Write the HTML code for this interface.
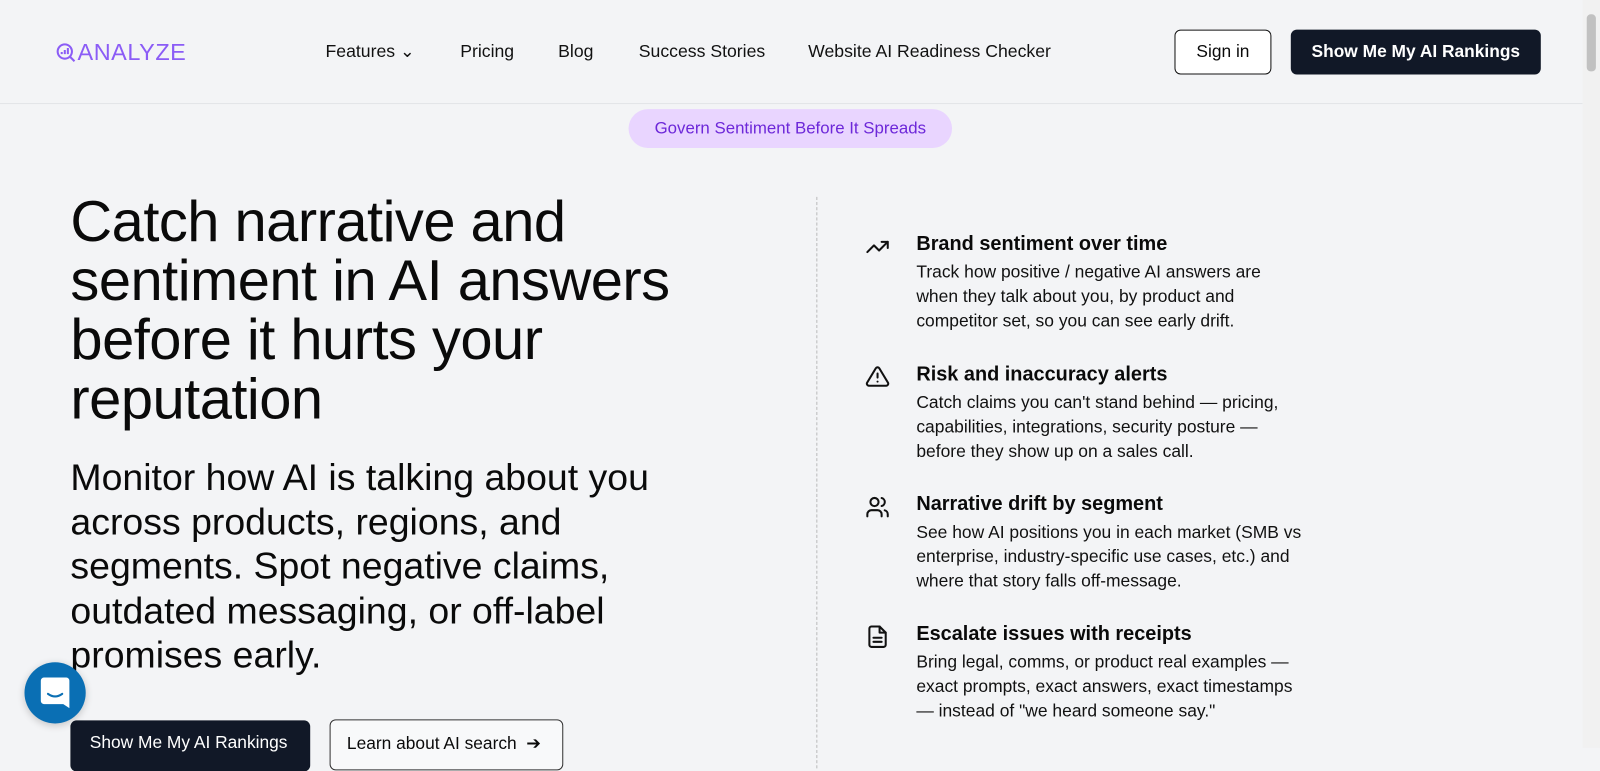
<!DOCTYPE html>
<html><head><meta charset="utf-8"><style>
*{box-sizing:border-box;margin:0;padding:0}
body{width:1600px;height:748px;overflow:hidden;background:#f3f4f6;font-family:"Liberation Sans",Arial,sans-serif;color:#0a0a0a;position:relative}
#w{position:absolute;left:0;top:0;width:1568px;height:733px;transform:scale(1.0204);transform-origin:0 0}
.hdr{position:absolute;left:0;top:0;width:1551px;height:102px;border-bottom:1px solid #e2e4e8;background:#f3f4f6}
.logo{position:absolute;left:55px;top:38px;color:#8b5cf6;font-size:23px;letter-spacing:0.5px;display:flex;align-items:center;gap:1px}
.nav a{position:absolute;top:40px;font-size:17.3px;color:#111;text-decoration:none}
.btn1{position:absolute;left:1151px;top:29px;width:95px;height:44px;border:1px solid #111;border-radius:6px;font-size:17px;display:flex;align-items:center;justify-content:center;background:#fff}
.btn2{position:absolute;left:1265px;top:29px;width:245px;height:44px;background:#111827;color:#fff;border-radius:6px;font-size:17px;font-weight:bold;display:flex;align-items:center;justify-content:center}
.pill{position:absolute;left:616px;top:107px;width:317px;height:38px;border-radius:19px;background:#e9d5ff;color:#6d28d9;font-size:16.5px;display:flex;align-items:center;justify-content:center}
h1{position:absolute;left:69px;top:189px;font-size:56.7px;line-height:58px;font-weight:normal;width:700px;letter-spacing:-0.5px}
.sub{position:absolute;left:69px;top:446px;font-size:36.7px;line-height:43.5px;width:620px}
.b1{position:absolute;left:69px;top:706px;width:235px;height:50px;background:#111827;color:#fff;border-radius:6px;font-size:17px;padding:12px 0 0 19px}
.b2{position:absolute;left:323px;top:705px;width:229px;height:50px;border:1px solid #333;border-radius:6px;font-size:17px;padding:13px 0 0 16px;background:#f8f9fa}
.dash{position:absolute;left:800px;top:193px;height:560px;border-left:1px dashed #bbb}
.item{position:absolute;left:898px;width:380px}
.item h3{font-size:19.5px;line-height:24px;font-weight:bold;margin-bottom:4px}
.item p{font-size:17.1px;line-height:24px;color:#111}
.ic{position:absolute;left:848px}
.chat{position:absolute;left:24px;top:649px;width:60px;height:60px;border-radius:50%;background:#0a6fb4;box-shadow:0 2px 8px rgba(0,0,0,.2)}
.sb{position:absolute;left:1551px;top:0;width:17px;height:733px;background:#f1f1f1}
.sb div{position:absolute;left:4px;top:14px;width:9px;height:56px;background:#c1c1c1;border-radius:4px}
</style></head><body><div id="w">
<div class="hdr">
<div class="logo"><svg width="20" height="20" viewBox="0 0 20 20" fill="none" stroke="#8b5cf6" stroke-width="2"><circle cx="8.5" cy="8.5" r="7"/><line x1="13.5" y1="13.5" x2="18" y2="18"/><line x1="5.5" y1="11" x2="5.5" y2="9"/><line x1="8.5" y1="11" x2="8.5" y2="7"/><line x1="11.5" y1="11" x2="11.5" y2="5"/></svg><span>ANALYZE</span></div>
<div class="nav"><a style="left:319px">Features ⌄</a><a style="left:451px">Pricing</a><a style="left:547px">Blog</a><a style="left:626px">Success Stories</a><a style="left:792px">Website AI Readiness Checker</a></div>
<div class="btn1">Sign in</div><div class="btn2">Show Me My AI Rankings</div>
</div>
<div class="pill">Govern Sentiment Before It Spreads</div>
<h1>Catch narrative and sentiment in AI answers before it hurts your reputation</h1>
<div class="sub">Monitor how AI is talking about you across products, regions, and segments. Spot negative claims, outdated messaging, or off-label promises early.</div>
<div class="b1">Show Me My AI Rankings</div>
<div class="b2">Learn about AI search &nbsp;➔</div>
<div class="dash"></div>
<svg class="ic" style="top:230px" width="24" height="24" viewBox="0 0 24 24" fill="none" stroke="#111" stroke-width="2" stroke-linecap="round" stroke-linejoin="round"><polyline points="2 17 8.5 10.5 13.5 15.5 22 7"/><polyline points="16 7 22 7 22 13"/></svg>
<div class="item" style="top:227px"><h3>Brand sentiment over time</h3><p>Track how positive / negative AI answers are when they talk about you, by product and competitor set, so you can see early drift.</p></div>
<svg class="ic" style="top:357px" width="24" height="24" viewBox="0 0 24 24" fill="none" stroke="#111" stroke-width="2" stroke-linecap="round" stroke-linejoin="round"><path d="M10.3 3.9 1.8 18a2 2 0 0 0 1.7 3h17a2 2 0 0 0 1.7-3L13.7 3.9a2 2 0 0 0-3.4 0z"/><line x1="12" y1="9" x2="12" y2="13"/><line x1="12" y1="17" x2="12" y2="17"/></svg>
<div class="item" style="top:355px"><h3>Risk and inaccuracy alerts</h3><p>Catch claims you can't stand behind — pricing, capabilities, integrations, security posture — before they show up on a sales call.</p></div>
<svg class="ic" style="top:485px" width="24" height="24" viewBox="0 0 24 24" fill="none" stroke="#111" stroke-width="2" stroke-linecap="round" stroke-linejoin="round"><path d="M16 21v-2a4 4 0 0 0-4-4H6a4 4 0 0 0-4 4v2"/><circle cx="9" cy="7" r="4"/><path d="M22 21v-2a4 4 0 0 0-3-3.9"/><path d="M16 3.1a4 4 0 0 1 0 7.8"/></svg>
<div class="item" style="top:482px"><h3>Narrative drift by segment</h3><p>See how AI positions you in each market (SMB vs enterprise, industry-specific use cases, etc.) and where that story falls off-message.</p></div>
<svg class="ic" style="top:612px" width="24" height="24" viewBox="0 0 24 24" fill="none" stroke="#111" stroke-width="2" stroke-linecap="round" stroke-linejoin="round"><path d="M14 2H6a2 2 0 0 0-2 2v16a2 2 0 0 0 2 2h12a2 2 0 0 0 2-2V8z"/><polyline points="14 2 14 8 20 8"/><line x1="16" y1="13" x2="8" y2="13"/><line x1="16" y1="17" x2="8" y2="17"/></svg>
<div class="item" style="top:609px"><h3>Escalate issues with receipts</h3><p>Bring legal, comms, or product real examples — exact prompts, exact answers, exact timestamps — instead of "we heard someone say."</p></div>
<div class="chat"><svg style="position:absolute;left:15px;top:14px" width="30" height="32" viewBox="0 0 30 32"><path d="M4 1h22a3 3 0 0 1 3 3v27l-6-4H4a3 3 0 0 1-3-3V4a3 3 0 0 1 3-3z" fill="#fff"/><path d="M8 17q7 5 14 0" stroke="#0a6fb4" stroke-width="2" fill="none" stroke-linecap="round"/></svg></div>
<div class="sb"><div></div></div>
</div></body></html>
